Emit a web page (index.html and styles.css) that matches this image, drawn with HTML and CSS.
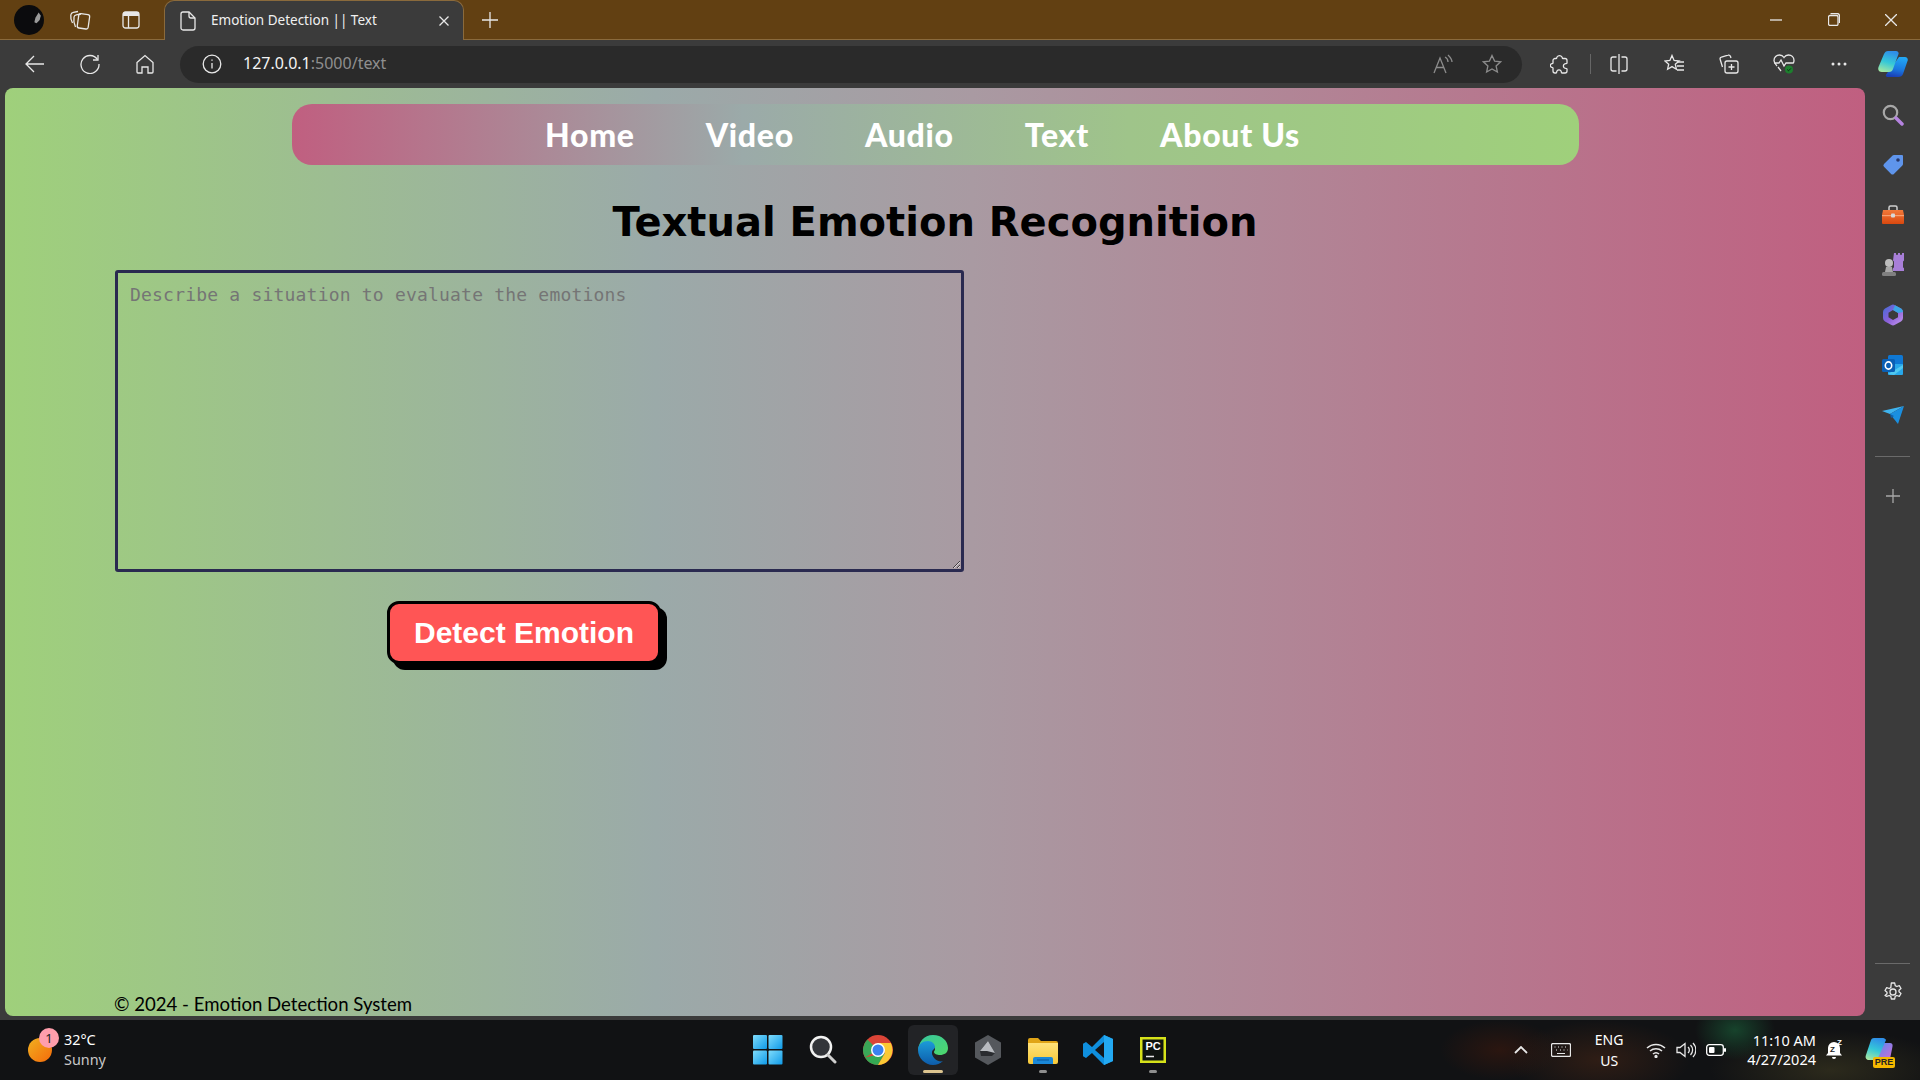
FILE: index.html
```html
<!DOCTYPE html>
<html>
	<head>
		<meta charset="UTF-8" />
		<meta name="viewport" content="width=device-width" />
		<title>Emotion Detection || Text</title>
		<link rel="stylesheet" href="styles.css">
	</head>
	<body>
		<svg class="defs" width="0" height="0">
			<defs>
				<linearGradient id="copilot-a" x1="0.5" y1="0" x2="0.2" y2="1"><stop offset="0" stop-color="#2f8fe8"/><stop offset="0.5" stop-color="#35c8d8"/><stop offset="1" stop-color="#a8e8a0"/></linearGradient>
				<linearGradient id="copilot-b" x1="0.6" y1="0" x2="0.4" y2="1"><stop offset="0" stop-color="#22a8f5"/><stop offset="0.6" stop-color="#1a78e0"/><stop offset="1" stop-color="#1a3fb4"/></linearGradient>
				<linearGradient id="copilot-c" x1="0" y1="0" x2="1" y2="1"><stop offset="0" stop-color="#4c8df0"/><stop offset="1" stop-color="#d86ad8"/></linearGradient>
				<linearGradient id="win" x1="0" y1="0" x2="1" y2="1"><stop offset="0" stop-color="#7fdcfb"/><stop offset="1" stop-color="#0f9ae8"/></linearGradient>
				<linearGradient id="edge-a" x1="0" y1="0" x2="1" y2="1"><stop offset="0" stop-color="#37c5a0"/><stop offset="1" stop-color="#4fd96a"/></linearGradient>
				<linearGradient id="edge-b" x1="0" y1="0" x2="0" y2="1"><stop offset="0" stop-color="#1c9bd8"/><stop offset="1" stop-color="#0d5cab"/></linearGradient>
				<linearGradient id="m365" x1="0" y1="0" x2="1" y2="1"><stop offset="0" stop-color="#3f6fd8"/><stop offset="0.5" stop-color="#8a5fd8"/><stop offset="1" stop-color="#c79af0"/></linearGradient>
				<linearGradient id="box" x1="0" y1="0" x2="0" y2="1"><stop offset="0" stop-color="#f2793a"/><stop offset="1" stop-color="#d9480f"/></linearGradient>
				<linearGradient id="folder" x1="0" y1="0" x2="0" y2="1"><stop offset="0" stop-color="#ffe27a"/><stop offset="1" stop-color="#f8c938"/></linearGradient>
			</defs>
		</svg>

		<div class="tabstrip">
			<div class="strip-btn">
				<svg width="30" height="30" viewBox="0 0 28 28"><circle cx="14" cy="14" r="14" fill="#0b0b0d"/><path d="M23 7l2 3-1 4-3 3-2-1 1-4z" fill="#9a9a9a"/></svg>
			</div>
			<div class="strip-btn">
				<svg class="line" width="22" height="22" viewBox="0 0 22 22"><rect x="9" y="5" width="11" height="14.500" rx="2" transform="rotate(8 14 12)"/><path d="M6.500 18C5 15 4.500 11 5 8c.2-1.300 1-2 2.200-2.200L12 5"/><path d="M3.500 14C2 11 1.500 8 1.800 6 2 4.500 3 3.500 4.300 3.300L9 2.500"/></svg>
			</div>
			<div class="strip-btn">
				<svg width="18" height="18" viewBox="0 0 18 18"><rect x="1" y="1" width="16" height="16" rx="2.500" fill="none" stroke="#e8e8e8" stroke-width="1.300"/><path d="M1 2.500A1.500 1.500 0 0 1 2.500 1h13A1.500 1.500 0 0 1 17 2.500V5H1z" fill="#e8e8e8"/><path d="M6.500 5v12" stroke="#e8e8e8" stroke-width="1.300"/></svg>
			</div>
			<div class="tab">
				<svg class="line" width="16" height="20" viewBox="0 0 16 20"><path d="M3 1h6l6 6v10a2 2 0 0 1-2 2H3a2 2 0 0 1-2-2V3a2 2 0 0 1 2-2z"/><path d="M9 1v4a2 2 0 0 0 2 2h4"/></svg>
				<span class="tab-title">Emotion Detection || Text</span>
				<svg class="line tab-close" width="10" height="10" viewBox="0 0 10 10"><path d="M.5.500l9 9M9.500.500l-9 9"/></svg>
			</div>
			<div class="newtab">
				<svg class="line" width="16" height="16" viewBox="0 0 16 16"><path d="M8 0v16M0 8h16"/></svg>
			</div>
			<div class="winctl">
				<div class="winbtn"><svg class="line" width="12" height="2" viewBox="0 0 12 2"><path d="M0 1h12"/></svg></div>
				<div class="winbtn"><svg class="line" width="12" height="13" viewBox="0 0 12 13"><rect x=".5" y="2.500" width="9.500" height="10" rx="1.500"/><path d="M2.500.500h6.500a2.500 2.500 0 0 1 2.500 2.500v7"/></svg></div>
				<div class="winbtn"><svg class="line" width="12" height="12" viewBox="0 0 12 12"><path d="M0 0l12 12M12 0L0 12"/></svg></div>
			</div>
		</div>

		<div class="toolbar">
			<div class="tool-btn"><svg class="line" width="20" height="18" viewBox="0 0 20 18"><path d="M19 9H1M9 1 1 9l8 8"/></svg></div>
			<div class="tool-btn"><svg class="line" width="20" height="20" viewBox="0 0 20 20"><path d="M17.500 5.500A9 9 0 1 0 19 10"/><path d="M18 1v5h-5"/></svg></div>
			<div class="tool-btn"><svg class="line" width="18" height="20" viewBox="0 0 18 20"><path d="M1 8.500 9 1.500l8 7V18a1 1 0 0 1-1 1h-4v-6H6v6H2a1 1 0 0 1-1-1z"/></svg></div>
			<div class="addressbar">
				<svg class="line info" width="20" height="20" viewBox="0 0 20 20"><circle cx="10" cy="10" r="8.800"/><path d="M10 9v5.500"/><path d="M10 5.500v1.200"/></svg>
				<span class="url"><b>127.0.0.1</b>:5000/text</span>
				<svg class="line dim read" width="20" height="20" viewBox="0 0 20 20"><path d="M1 19 7 4l6 15M3.500 13.500h7"/><path d="M12 3c2 1 3 3 3 5M15 1c2 2 4 4 4 7"/></svg>
				<svg class="line dim" width="20" height="20" viewBox="0 0 20 20"><path d="m10 1.500 2.600 5.600 6 .7-4.500 4.100 1.300 6.100-5.400-3.100-5.400 3.100 1.300-6.100L1.400 7.800l6-.7z"/></svg>
			</div>
			<div class="tool-btn ext"><svg class="line" width="18" height="20" viewBox="0 0 18 20"><path d="M7 3a3 3 0 0 1 5 0c.5.800 0 1.500 1 1.500h2a2 2 0 0 1 2 2v2.500c0 1-1.500.5-2.500 1-1.500 1-1.500 3 0 4 1 .5 2.500 0 2.500 1V17a2 2 0 0 1-2 2h-3c-1 0-.5-1.500-1-2-1-1.500-3-1.500-4 0-.5.500 0 2-1 2H5a2 2 0 0 1-2-2v-3c0-1-1.500-.5-2-1a2 2 0 0 1 0-3c.5-.5 2 0 2-1V6.500a2 2 0 0 1 2-2h1c1 0 .5-.7 1-1.500z"/></svg></div>
			<span class="tool-sep"></span>
			<div class="tool-btn"><svg class="line" width="18" height="20" viewBox="0 0 18 20"><path d="M9 0v20"/><path d="M6.500 3H3a2 2 0 0 0-2 2v10a2 2 0 0 0 2 2h3.500"/><path d="M11.500 3H15a2 2 0 0 1 2 2v10a2 2 0 0 1-2 2h-3.500"/></svg></div>
			<div class="tool-btn"><svg class="line" width="20" height="20" viewBox="0 0 20 20"><path d="m8 1.500 2.100 5 5 .5-3.800 3.200 1.100 5-4.400-2.600-4.400 2.600 1.100-5L.9 7l5-.5z"/><path d="M13 8h7M13 12h7M13 16h7"/></svg></div>
			<div class="tool-btn"><svg class="line" width="20" height="20" viewBox="0 0 20 20"><rect x="6" y="7" width="13" height="12" rx="2"/><path d="M12.500 10v6M9.500 13h6"/><path d="M3.500 13 1.200 5.500A2 2 0 0 1 2.500 3L9 1.200a2 2 0 0 1 2.500 1.300L12 4"/></svg></div>
			<div class="tool-btn">
				<svg width="22" height="20" viewBox="0 0 22 20"><path d="M4 12C2 10 1 8.500 1 6.500 1 3 3.500 1 6.500 1 8.500 1 10 2 11 3.500 12 2 13.500 1 15.500 1 18.500 1 21 3 21 6.500c0 1-.3 2-.8 3M1 9h5l2-3 3 6 2-3h7M5 13l3 4" fill="none" stroke="#e8e8e8" stroke-width="1.300"/><circle cx="16" cy="15.500" r="4" fill="#1d7f2e"/><path d="m14.200 15.500 1.300 1.300 2.300-2.300" fill="none" stroke="#0b2a10" stroke-width="1"/></svg>
			</div>
			<div class="tool-btn"><svg width="16" height="4" viewBox="0 0 16 4"><circle cx="2" cy="2" r="1.500" fill="#e8e8e8"/><circle cx="8" cy="2" r="1.500" fill="#e8e8e8"/><circle cx="14" cy="2" r="1.500" fill="#e8e8e8"/></svg></div>
			<div class="tool-btn last"><svg width="30" height="28" viewBox="0 0 30 28"><path d="M21 7h6c2 0 3.500 2 2.500 4L25 24c-.6 2-2.500 3-4.500 3H10c-2 0-3-1.500-1.500-3z" fill="url(#copilot-b)"/><path d="M10 1h8c2 0 3 1.500 2.500 3L15 19c-.5 2-2 3-4 3H4C1 22-.5 20 .5 17L6 4C7 2 8 1 10 1z" fill="url(#copilot-a)"/></svg></div>
		</div>

		<div class="browser">
			<div class="page">
				<nav class="navbar">
					<a href="#">Home</a>
					<a href="#">Video</a>
					<a href="#">Audio</a>
					<a href="#">Text</a>
					<a href="#">About Us</a>
				</nav>
				<h1>Textual Emotion Recognition</h1>
				<form class="emotion-form">
					<textarea placeholder="Describe a situation to evaluate the emotions"></textarea>
					<button type="button">Detect Emotion</button>
				</form>
				<footer class="page-footer">© 2024 - Emotion Detection System</footer>
			</div>
			<aside class="sidebar">
				<div class="side-btn"><svg width="22" height="22" viewBox="0 0 22 22"><circle cx="8.500" cy="8.500" r="6.700" fill="none" stroke="#a8a8a8" stroke-width="2.200"/><path d="m14 14 6 6" stroke="#b583e0" stroke-width="3.500" stroke-linecap="round"/></svg></div>
				<div class="side-btn"><svg width="22" height="22" viewBox="0 0 22 22"><path d="M12 1h8a1 1 0 0 1 1 1v8a2 2 0 0 1-.6 1.400l-8.500 8.500a2 2 0 0 1-2.800 0L2 12.800a2 2 0 0 1 0-2.800l8.600-8.500A2 2 0 0 1 12 1z" fill="#5f95ec"/><circle cx="16" cy="6" r="1.800" fill="#27386b"/></svg></div>
				<div class="side-btn"><svg width="24" height="20" viewBox="0 0 24 20"><path d="M8 5V2.500A1.500 1.500 0 0 1 9.500 1h5A1.500 1.500 0 0 1 16 2.500V5" fill="none" stroke="#d0d0d0" stroke-width="1.500"/><path d="M2 5h20l1 5v8a1 1 0 0 1-1 1H2a1 1 0 0 1-1-1v-8z" fill="url(#box)"/><path d="M1 10h22v1.200H1z" fill="#f7a070"/><rect x="10" y="8.500" width="4" height="4" rx="1" fill="#d8d8d8"/></svg></div>
				<div class="side-btn"><svg width="24" height="24" viewBox="0 0 24 24"><path d="M14 1h2v2h2V1h2v2h2V1h2v8l-1 1v6l1 1v3H13v-3l1-1v-6l-1-1z" transform="translate(-1 -1) scale(1 .95)" fill="#a87fd8"/><circle cx="8" cy="10" r="4" fill="#bdbdbd"/><path d="M5 14h6l1 5H4z" fill="#a8a8a8"/><rect x="1" y="19" width="14" height="4" rx="1.500" fill="#808080"/></svg></div>
				<div class="side-btn"><svg width="22" height="22" viewBox="0 0 22 22"><path d="M9 1.200a4 4 0 0 1 4 0l6 3.400a4 4 0 0 1 2 3.400v6a4 4 0 0 1-2 3.400l-6 3.400a4 4 0 0 1-4 0l-6-3.400a4 4 0 0 1-2-3.400V8a4 4 0 0 1 2-3.400z" fill="url(#m365)"/><path d="M11 6l5 2.800v4.400L11 16l-4.500-2.800V8.800z" fill="#3b3b3b"/><path d="M13 1.200l6 3.400a4 4 0 0 1 2 3.400l-5 1-5-3z" fill="#3ba5e4"/></svg></div>
				<div class="side-btn"><svg width="22" height="22" viewBox="0 0 22 22"><rect x="6" y="1" width="15" height="15" rx="1.500" fill="#0f78d4"/><path d="M6 10h15v10a1 1 0 0 1-1 1H7a1 1 0 0 1-1-1z" fill="#28a8ea"/><path d="m6 20 15-9v3l-9 7z" fill="#50c8f0"/><rect x="0" y="5" width="13" height="13" rx="1.500" fill="#0a5fb4"/><ellipse cx="6.500" cy="11.500" rx="3.200" ry="3.600" fill="none" stroke="#fff" stroke-width="1.600"/></svg></div>
				<div class="side-btn"><svg width="22" height="18" viewBox="0 0 22 18"><path d="M0 5 22 0 8 8z" fill="#3fb4ef"/><path d="M22 0 8 8l8 10z" fill="#1a8fe0"/><path d="M8 8l1 4 3-2z" fill="#0f5fa8"/></svg></div>
				<span class="side-sep"></span>
				<div class="side-btn"><svg class="line dim2" width="14" height="14" viewBox="0 0 14 14"><path d="M7 0v14M0 7h14"/></svg></div>
				<span class="side-sep side-sep-low"></span>
				<div class="side-btn"><svg class="line" width="20" height="20" viewBox="0 0 20 20"><circle cx="10" cy="10" r="3"/><path d="M8.300 1h3.400l.5 2.600 1.600.9 2.500-.9 1.700 2.900-2 1.700v1.600l2 1.700-1.700 2.900-2.500-.9-1.600.9-.5 2.600H8.300l-.5-2.600-1.600-.9-2.500.9L2 13.500l2-1.700v-1.600l-2-1.700 1.700-2.900 2.500.9 1.600-.9z" stroke-linejoin="round"/></svg></div>
			</aside>
		</div>

		<div class="taskbar">
			<div class="weather">
				<div class="weather-icon"><span class="badge">1</span></div>
				<div class="weather-text">
					<span>32°C</span>
					<span class="weather-sub">Sunny</span>
				</div>
			</div>
			<div class="task-icons">
				<div class="task-btn"><svg width="30" height="30" viewBox="0 0 30 30"><rect width="14" height="14" rx="1" fill="url(#win)"/><rect x="15.500" width="14" height="14" rx="1" fill="url(#win)"/><rect y="15.500" width="14" height="14" rx="1" fill="url(#win)"/><rect x="15.500" y="15.500" width="14" height="14" rx="1" fill="url(#win)"/></svg></div>
				<div class="task-btn"><svg width="28" height="30" viewBox="0 0 28 30"><circle cx="12" cy="12" r="10" fill="#33353a" stroke="#f2f2f2" stroke-width="2.500"/><path d="m19 20 7 7" stroke="#cfcfcf" stroke-width="3" stroke-linecap="round"/></svg></div>
				<div class="task-btn"><svg width="30" height="30" viewBox="0 0 30 30"><circle cx="15" cy="15" r="15" fill="#db4437"/><path d="M15 15 2 22.500A15 15 0 0 1 4.400 4.400z" fill="#3aa757"/><path d="M2 22.500A15 15 0 0 0 15 30l7-12z" fill="#34a853"/><path d="M15 8h12.800A15 15 0 0 1 15 30l7-12z" fill="#fcc934"/><circle cx="15" cy="15" r="7" fill="#fff"/><circle cx="15" cy="15" r="5.500" fill="#3b82f0"/></svg></div>
				<div class="task-btn task-active">
					<svg width="30" height="30" viewBox="0 0 30 30"><path d="M15 0c9 0 15 6 15 13 0 5-4 7-8 7-3 0-6-1-6-3 0-1 1-1.500 1-3 0-3-3-6-7-6C5 8 0 12 0 17 0 7 6 0 15 0z" fill="url(#edge-a)"/><path d="M0 15C0 9 5 6 10 6c4 0 7 3 7 6 0 1-1 2-2 3-2 2-1 6 2 9 2 2 6 3 8 2a15 15 0 0 1-10 4C7 30 0 23 0 15z" fill="url(#edge-b)"/></svg>
					<span class="task-line"></span>
				</div>
				<div class="task-btn"><svg width="26" height="30" viewBox="0 0 26 30"><path d="M13 0 26 7.500v15L13 30 0 22.500v-15z" fill="#55585d"/><path d="M13 6 20 18l-3 3H6l-1-5z" fill="#2a2c30"/><path d="M13 6l7 12-8-2-7 0z" fill="#b8bbc0"/></svg></div>
				<div class="task-btn">
					<svg width="30" height="27" viewBox="0 0 30 27"><path d="M0 3a2 2 0 0 1 2-2h8l3 3h15a2 2 0 0 1 2 2v3H0z" fill="#e0a417"/><path d="M0 6h30v19a2 2 0 0 1-2 2H2a2 2 0 0 1-2-2z" fill="url(#folder)"/><path d="M5 27v-5a2 2 0 0 1 2-2h16a2 2 0 0 1 2 2v5z" fill="#1a88d8"/><path d="M9 23h12" stroke="#0e5fa5" stroke-width="1.200"/></svg>
					<span class="task-dot"></span>
				</div>
				<div class="task-btn"><svg width="30" height="30" viewBox="0 0 30 30"><path d="M21 0 30 4v22l-9 4L9 18l-6 5-3-1.800V8.800L3 7l6 5z" fill="#0f8fde"/><path d="M21 0 30 4v22l-9 4z" fill="#23a9f2"/><path d="M21 7 12 15l9 8z" fill="#14161a"/></svg></div>
				<div class="task-btn">
					<svg width="26" height="26" viewBox="0 0 26 26"><rect width="26" height="26" fill="#d6e21a"/><rect x="2.500" y="2.500" width="21" height="21" fill="#0e1410"/><path d="M6 19.500h8" stroke="#e8e8e8" stroke-width="1.500"/><text x="5.500" y="13" class="pc-mark">PC</text></svg>
					<span class="task-dot"></span>
				</div>
			</div>
			<div class="tray">
				<svg class="line" width="14" height="8" viewBox="0 0 14 8"><path d="M1 7l6-6 6 6" stroke-width="1.800"/></svg>
				<svg class="line kbd" width="20" height="14" viewBox="0 0 20 14"><rect x=".5" y=".5" width="19" height="13" rx="1.500"/><path d="M3.500 4h1M7 4h1M10.500 4h1M14 4h1M5 7h1M9 7h1M12.500 7h1M16 7h.5M6 10.500h8" stroke-width="1.200"/></svg>
				<div class="lang"><span>ENG</span><span>US</span></div>
				<svg class="line wifi" width="20" height="16" viewBox="0 0 20 16"><path d="M1 6a13 13 0 0 1 18 0M4 9a9 9 0 0 1 12 0M7 12a4.500 4.500 0 0 1 6 0" stroke-width="1.500"/><circle cx="10" cy="14.500" r="1" fill="#fff"/></svg>
				<svg class="line vol" width="20" height="16" viewBox="0 0 20 16"><path d="M1 5.500h3L9 1.500v13l-5-4H1z"/><path d="M12 5a4 4 0 0 1 0 6M14.500 3a7 7 0 0 1 0 10M17 1a10 10 0 0 1 0 14"/></svg>
				<svg class="batt" width="20" height="12" viewBox="0 0 20 12"><rect x=".7" y=".7" width="16.600" height="10.600" rx="2.500" fill="none" stroke="#fff" stroke-width="1.300"/><rect x="3" y="3" width="5.500" height="6" rx="1" fill="#fff"/><rect x="18" y="4" width="2" height="4" rx="1" fill="#fff"/></svg>
				<div class="clock"><span>11:10 AM</span><span>4/27/2024</span></div>
				<svg class="bell" width="18" height="22" viewBox="0 0 18 22"><path d="M8 3a6 6 0 0 1 6 6v5l2 2.500H0L2 14V9a6 6 0 0 1 6-6z" fill="#fff"/><path d="M6 18a2 2 0 0 0 4 0z" fill="#fff"/><text x="4" y="13" class="zz">Z</text><text x="11" y="6" class="zz2">Z</text></svg>
				<div class="copilot-pre">
					<svg width="30" height="26" viewBox="0 0 30 26"><path d="M19 6h6c2 0 3 1.500 2.500 3.500L25 22c-.5 1.500-1.500 3-4 3H11c-1.500 0-2-1-1.500-2z" fill="url(#copilot-c)"/><path d="M9 1h9c1.500 0 2.500 1 3 2l-8 18c-.5 1.200-1.500 2-3 2H4C1.500 23 0 21 .8 18.500L6 3c.5-1.200 1.500-2 3-2z" fill="url(#copilot-a)"/></svg>
					<span class="pre-tag">PRE</span>
				</div>
			</div>
		</div>
	</body>
</html>
```

FILE: styles.css
```css
* {
    box-sizing: border-box;
}

body {
    margin: 0;
    width: 1920px;
    height: 1080px;
    overflow: hidden;
    background-color: #3b3b3b;
    font-family: "Noto Sans", "Open Sans", sans-serif;
    color: white;
}

.defs {
    position: absolute;
}

svg {
    display: block;
    flex-shrink: 0;
}

.line {
    fill: none;
    stroke: #e8e8e8;
    stroke-width: 1.3;
}

.line.dim {
    stroke: #8c8c8c;
}

.line.dim2 {
    stroke: #a8a8a8;
}

/* tab strip */
.tabstrip {
    height: 40px;
    display: flex;
    align-items: flex-end;
    padding-left: 3px;
    background-color: #624012;
    border-bottom: 1px solid #8a6a3c;
}

.strip-btn {
    width: 51px;
    height: 39px;
    display: flex;
    align-items: center;
    justify-content: center;
}

.tab {
    width: 300px;
    height: 40px;
    margin-left: 8px;
    margin-bottom: -1px;
    display: flex;
    align-items: center;
    padding: 0 14px 0 15px;
    background-color: #3b3b3b;
    border: 1px solid #8a6a3c;
    border-bottom: none;
    border-radius: 10px 10px 0 0;
}

.tab-title {
    margin-left: 15px;
    padding-bottom: 2px;
    font-size: 13.5px;
    color: #f0f0f0;
    white-space: nowrap;
}

.tab-close {
    margin-left: auto;
}

.newtab {
    width: 46px;
    height: 39px;
    margin-left: 3px;
    display: flex;
    align-items: center;
    justify-content: center;
}

.winctl {
    display: flex;
    margin-left: auto;
}

.winbtn {
    width: 57.5px;
    height: 39px;
    display: flex;
    align-items: center;
    justify-content: center;
}

/* toolbar */
.toolbar {
    height: 48px;
    display: flex;
    align-items: center;
    padding-left: 7px;
}

.tool-btn {
    width: 55px;
    height: 38px;
    flex: none;
    display: flex;
    align-items: center;
    justify-content: center;
}

.tool-btn.ext {
    margin-left: 9.5px;
}

.tool-btn.last {
    width: 53px;
}

.tool-sep {
    width: 1px;
    height: 20px;
    margin-left: 3.5px;
    background-color: #666;
}

.addressbar {
    width: 1342px;
    height: 37px;
    margin-left: 8px;
    flex: none;
    display: flex;
    align-items: center;
    gap: 26px;
    padding: 0 20px 0 22px;
    background-color: #2a2a2a;
    border-radius: 19px;
}

.info {
    margin-right: -5px;
}

.read {
    margin-right: 3px;
}

.url {
    padding-bottom: 2px;
    font-size: 16px;
    color: #8f8f8f;
    margin-right: auto;
}

.url b {
    font-weight: 400;
    color: #f4f4f4;
}

/* page */
.browser {
    height: 932px;
    display: flex;
}

.page {
    width: 1860px;
    height: 928px;
    margin-left: 5px;
    padding-top: 16px;
    display: flex;
    flex-direction: column;
    overflow: hidden;
    border-radius: 8px;
    background: linear-gradient(to right, #9fd07b, #9baaa9 35%, #a99aa2 52%, #c05f80);
    color: black;
}

.navbar {
    width: 1287px;
    height: 61px;
    margin: 0 auto;
    padding-right: 25px;
    display: flex;
    align-items: center;
    justify-content: center;
    gap: 71px;
    border-radius: 20px;
    background: linear-gradient(to right, #c05f80, #9baaa9 35%, #9fc48a 65%, #9fd07b);
}

.navbar a {
    font-family: Lato, sans-serif;
    font-size: 32px;
    font-weight: 900;
    letter-spacing: 0.7px;
    color: white;
    text-decoration: none;
}

h1 {
    margin: 32px 0 0;
    font-family: "DejaVu Sans", sans-serif;
    font-size: 40px;
    line-height: 50px;
    font-weight: 700;
    text-align: center;
}

.emotion-form {
    display: flex;
    flex-direction: column;
    align-items: flex-start;
    margin: 23px 0 0 110px;
}

textarea {
    width: 849px;
    height: 302px;
    padding: 11px 12px;
    font-family: "DejaVu Sans Mono", monospace;
    font-size: 18px;
    letter-spacing: 0.2px;
    background: transparent;
    border: 3px solid #2a2a50;
    border-radius: 3px;
    outline: none;
}

textarea::placeholder {
    color: #757575;
}

button {
    width: 274px;
    height: 63px;
    margin: 29px 0 0 272px;
    font-family: "Liberation Sans", sans-serif;
    font-size: 30px;
    font-weight: 700;
    color: white;
    background-color: #ff5555;
    border: 3px solid black;
    border-radius: 12px;
    box-shadow: 6px 6px 0 black;
}

.page-footer {
    margin-top: auto;
    padding-left: 109px;
    font-family: Lato, sans-serif;
    font-size: 18.6px;
    line-height: 24px;
}

/* sidebar */
.sidebar {
    width: 55px;
    height: 932px;
    padding: 2px 0 3px;
    display: flex;
    flex-direction: column;
    align-items: center;
}

.side-btn {
    width: 50px;
    height: 50px;
    flex-shrink: 0;
    display: flex;
    align-items: center;
    justify-content: center;
}

.side-sep {
    width: 35px;
    height: 1px;
    margin: 16px 0 14px;
    background-color: #6a6a6a;
}

.side-sep-low {
    margin: auto 0 3px;
}

/* taskbar */
.taskbar {
    height: 60px;
    display: grid;
    grid-template-columns: 1fr auto 1fr;
    align-items: center;
    background-color: #111214;
    background-image:
        radial-gradient(ellipse 40px 30px at 1735px 10px, #17432c, transparent),
        radial-gradient(ellipse 90px 40px at 1600px 40px, #2f1d15, transparent),
        radial-gradient(ellipse 120px 40px at 1830px 50px, #2c2a1c, transparent),
        radial-gradient(ellipse 60px 30px at 1500px 30px, #2b1610, transparent);
}

.weather {
    display: flex;
    align-items: center;
    padding-left: 28px;
    gap: 12px;
}

.weather-icon {
    position: relative;
    width: 24px;
    height: 24px;
    border-radius: 50%;
    background: linear-gradient(135deg, #f0b020, #f46a0a);
}

.badge {
    position: absolute;
    top: -10px;
    left: 11px;
    width: 20px;
    height: 20px;
    border-radius: 50%;
    background-color: #ff9eac;
    color: #222;
    font-size: 13px;
    line-height: 20px;
    text-align: center;
}

.weather-text {
    display: flex;
    flex-direction: column;
    font-size: 14.4px;
    line-height: 20px;
}

.weather-sub {
    color: #c8c8c8;
}

.task-icons {
    display: flex;
    gap: 5px;
    align-items: center;
}

.task-btn {
    position: relative;
    width: 50px;
    height: 50px;
    display: flex;
    align-items: center;
    justify-content: center;
    border-radius: 6px;
}

.task-active {
    background-color: #222326;
}

.task-line {
    position: absolute;
    bottom: 2px;
    left: 15px;
    width: 20px;
    height: 3px;
    border-radius: 2px;
    background-color: #dcc48f;
}

.task-dot {
    position: absolute;
    bottom: 2px;
    left: 21px;
    width: 8px;
    height: 3px;
    border-radius: 2px;
    background-color: #8e8e8e;
}

.pc-mark {
    font-family: "Liberation Sans", sans-serif;
    font-size: 11px;
    font-weight: 700;
    fill: #fff;
}

.tray {
    display: flex;
    align-items: center;
    justify-content: flex-end;
    padding-right: 25px;
}

.tray .kbd {
    margin-left: 23px;
}

.lang {
    display: flex;
    flex-direction: column;
    align-items: center;
    width: 40px;
    margin-left: 18px;
    font-size: 14px;
    line-height: 21px;
}

.wifi {
    margin-left: 17px;
}

.vol {
    margin-left: 10px;
}

.batt {
    margin-left: 10px;
}

.clock {
    display: flex;
    flex-direction: column;
    align-items: flex-end;
    margin-left: 21px;
    font-size: 14.5px;
    line-height: 19px;
}

.bell {
    margin-left: 10px;
}

.zz {
    font-family: "Liberation Sans", sans-serif;
    font-size: 8px;
    font-weight: 700;
    fill: #222;
}

.zz2 {
    font-family: "Liberation Sans", sans-serif;
    font-size: 8px;
    font-weight: 700;
    fill: #fff;
}

.copilot-pre {
    position: relative;
    margin-left: 21px;
}

.pre-tag {
    position: absolute;
    left: 8px;
    bottom: -5px;
    width: 22px;
    height: 11px;
    border-radius: 2px;
    background-color: #f5b800;
    color: #222;
    font-family: "Liberation Sans", sans-serif;
    font-size: 9px;
    line-height: 11px;
    font-weight: 700;
    text-align: center;
}
```
